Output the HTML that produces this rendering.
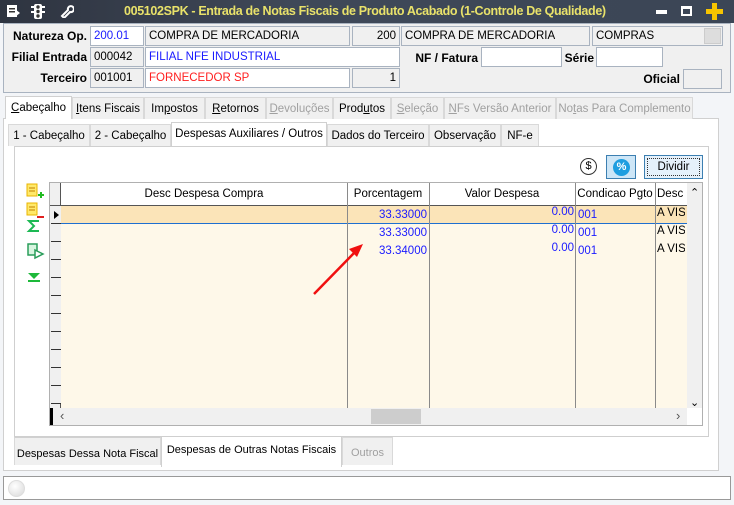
<!DOCTYPE html>
<html><head><meta charset="utf-8"><style>
*{box-sizing:border-box;margin:0;padding:0}
body{width:734px;height:505px;background:#f3f5f8;font-family:"Liberation Sans",sans-serif;font-size:12px;color:#000;position:relative;overflow:hidden}
.a{position:absolute}
.title{left:0;top:0;width:734px;height:23px;background:linear-gradient(90deg,#2e3440 0%,#3f4858 40%,#3b4656 100%)}
.title .t{left:124px;top:4px;color:#e9e26a;font-weight:bold;font-size:12.5px;letter-spacing:-0.35px;white-space:nowrap}
.inp{position:absolute;height:20px;border:1px solid #a9b3c0;background:#fff;padding:3px 3px;font-size:11.5px;white-space:nowrap;overflow:hidden}
.g{background:#f0f0f0}
.lbl{position:absolute;font-weight:bold;font-size:12px;text-align:right;white-space:nowrap}
.tab{position:absolute;height:22px;border:1px solid #d9d9d9;border-bottom:none;background:#f0f0f0;padding:5px 0 0;text-align:center;font-size:11.5px;white-space:nowrap}
.dis{color:#a0a0a0}
.act{background:#fff;border-color:#d0d0d0}
.vl{position:absolute;top:183px;height:225px;border-left:1px solid #8a8a8a}
.cell{position:absolute;font-size:11.5px;color:#1a1aff;white-space:nowrap}
.ind{position:absolute;left:51px;width:10px;height:18px;border-bottom:1px solid #333;background:#f0f0f0}
</style></head><body>
<div class="a title">
 <svg class="a" style="left:6px;top:4px" width="14" height="14"><rect x="1" y="1" width="10" height="12" fill="#fff"/><rect x="3" y="4" width="6" height="1.5" fill="#333"/><rect x="3" y="7" width="6" height="1.5" fill="#333"/><path d="M9 5l5 4-5 4z" fill="#fff"/></svg>
 <svg class="a" style="left:31px;top:3px" width="14" height="17"><rect x="3" y="1" width="8" height="15" rx="2" fill="#fff"/><circle cx="7" cy="4" r="1.7" fill="#333"/><circle cx="7" cy="8.5" r="1.7" fill="#333"/><circle cx="7" cy="13" r="1.7" fill="#333"/><rect x="0" y="3" width="3" height="2" fill="#fff"/><rect x="0" y="8" width="3" height="2" fill="#fff"/><rect x="11" y="3" width="3" height="2" fill="#fff"/><rect x="11" y="8" width="3" height="2" fill="#fff"/></svg>
 <svg class="a" style="left:60px;top:4px" width="14" height="14"><path d="M2 12l6-6a3 3 0 1 1 2 2l-6 6z" fill="none" stroke="#fff" stroke-width="2"/></svg>
 <div class="a t">005102SPK - Entrada de Notas Fiscais de Produto Acabado (1-Controle De Qualidade)</div>
 <div class="a" style="left:656px;top:10px;width:11px;height:4px;background:#fff"></div>
 <div class="a" style="left:681px;top:6px;width:11px;height:10px;border:2px solid #fff;border-top-width:3px"></div>
 <div class="a" style="left:712px;top:3px;width:5px;height:17px;background:#f6c400"></div>
 <div class="a" style="left:706px;top:9px;width:17px;height:5px;background:#f6c400"></div>
</div>
<div class="a" style="left:3px;top:23px;width:728px;height:70px;border:1px solid #a9b3c0;background:#f0f0f0"></div>
<div class="lbl" style="left:0;top:29px;width:87px">Natureza Op.</div>
<div class="inp" style="left:90px;top:26px;width:54px;color:#1a1aff">200.01</div>
<div class="inp g" style="left:145px;top:26px;width:205px">COMPRA DE MERCADORIA</div>
<div class="inp g" style="left:352px;top:26px;width:48px;text-align:right">200</div>
<div class="inp g" style="left:401px;top:26px;width:189px">COMPRA DE MERCADORIA</div>
<div class="inp g" style="left:592px;top:26px;width:131px">COMPRAS<div class="a" style="right:1px;top:1px;width:17px;height:16px;background:#ddd;border:1px solid #ccc"></div></div>
<div class="lbl" style="left:0;top:50px;width:87px">Filial Entrada</div>
<div class="inp g" style="left:90px;top:47px;width:54px">000042</div>
<div class="inp" style="left:145px;top:47px;width:255px;color:#1a1aff">FILIAL NFE INDUSTRIAL</div>
<div class="lbl" style="left:400px;top:51px;width:78px">NF / Fatura</div>
<div class="inp" style="left:481px;top:47px;width:81px"></div>
<div class="lbl" style="left:560px;top:51px;width:34px">Série</div>
<div class="inp" style="left:596px;top:47px;width:67px"></div>
<div class="lbl" style="left:0;top:71px;width:87px">Terceiro</div>
<div class="inp g" style="left:90px;top:68px;width:54px">001001</div>
<div class="inp" style="left:145px;top:68px;width:205px;color:#ff2020">FORNECEDOR SP</div>
<div class="inp g" style="left:352px;top:68px;width:48px;text-align:right">1</div>
<div class="lbl" style="left:620px;top:72px;width:60px">Oficial</div>
<div class="inp g" style="left:683px;top:69px;width:39px"></div>

<div class="a" style="left:3px;top:118px;width:716px;height:353px;border:1px solid #d0d0d0;background:#fff"></div>
<div class="tab act" style="left:5px;top:96px;width:67px;height:23px"><u>C</u>abeçalho</div>
<div class="tab" style="left:72px;top:97px;width:72px"><u>I</u>tens Fiscais</div>
<div class="tab" style="left:144px;top:97px;width:61px">Im<u>p</u>ostos</div>
<div class="tab" style="left:205px;top:97px;width:61px"><u>R</u>etornos</div>
<div class="tab dis" style="left:266px;top:97px;width:67px"><u>D</u>evoluções</div>
<div class="tab" style="left:333px;top:97px;width:58px">Prod<u>u</u>tos</div>
<div class="tab dis" style="left:391px;top:97px;width:53px"><u>S</u>eleção</div>
<div class="tab dis" style="left:444px;top:97px;width:112px"><u>N</u>Fs Versão Anterior</div>
<div class="tab dis" style="left:556px;top:97px;width:137px">No<u>t</u>as Para Complemento</div>

<div class="tab" style="left:8px;top:124px;width:82px">1 - Cabeçalho</div>
<div class="tab" style="left:90px;top:124px;width:81px">2 - Cabeçalho</div>
<div class="tab act" style="left:171px;top:122px;width:156px;height:25px;padding-top:5px">Despesas Auxiliares / Outros</div>
<div class="tab" style="left:327px;top:124px;width:102px">Dados do Terceiro</div>
<div class="tab" style="left:429px;top:124px;width:72px">Observação</div>
<div class="tab" style="left:501px;top:124px;width:38px">NF-e</div>

<div class="a" style="left:14px;top:146px;width:695px;height:291px;border:1px solid #cfcfcf;background:#fff"></div>
<div class="a" style="left:580px;top:158px;width:17px;height:17px;border:1.5px solid #333;border-radius:50%;text-align:center;font-size:11px;line-height:14px">$</div>
<div class="a" style="left:606px;top:155px;width:30px;height:24px;border:1px solid #3c7fb1;background:#cde6f7"><div class="a" style="left:6px;top:3px;width:17px;height:17px;border-radius:50%;background:#1e9ee0;color:#fff;font-weight:bold;font-size:11px;text-align:center;line-height:17px">%</div></div>
<div class="a" style="left:644px;top:155px;width:59px;height:24px;border:1px solid #3c7fb1;background:#e5f1fb;text-align:center;line-height:22px;font-size:11.5px"><div class="a" style="left:2px;top:2px;right:2px;bottom:2px;border:1px dotted #333"></div>Dividir</div>

<svg class="a" style="left:25px;top:182px" width="20" height="105">
 <rect x="2" y="2" width="10" height="12" fill="#ffe96a" stroke="#e8b400"/><line x1="4" y1="6" x2="10" y2="6" stroke="#c08000"/><line x1="4" y1="9" x2="10" y2="9" stroke="#c08000"/>
 <path d="M13 13h6M16 10v6" stroke="#22bb22" stroke-width="2"/>
 <rect x="2" y="21" width="10" height="12" fill="#ffe96a" stroke="#e8b400"/><line x1="4" y1="25" x2="10" y2="25" stroke="#c08000"/><line x1="4" y1="28" x2="10" y2="28" stroke="#c08000"/>
 <path d="M12 35h7" stroke="#e02020" stroke-width="2"/>
 <path d="M14 49H4l5-5-5-5h10" fill="none" stroke="#1db954" stroke-width="2"/>
 <rect x="3" y="62" width="9" height="11" fill="#d8f5e0" stroke="#2a9d5a" stroke-width="1.5"/><path d="M10 68l8 4-8 4z" fill="#fff" stroke="#2a9d5a" stroke-width="1.5"/>
 <path d="M3 91h12l-6 6z" fill="#1db93a"/><rect x="3" y="98" width="12" height="2" fill="#1db93a"/>
</svg>

<div class="a" style="left:49px;top:182px;width:654px;height:244px;border:1px solid #b0b0b0;background:#fff"></div>
<div class="a" style="left:61px;top:206px;width:626px;height:202px;background:#fef8e9"></div>
<div class="a" style="left:61px;top:206px;width:626px;height:18px;background:#fbe4b8;border-bottom:1px solid #1e6fd0"></div>
<div class="a" style="left:50px;top:183px;width:11px;height:225px;background:#f0f0f0;border-right:1px solid #555"></div>
<div class="a" style="left:50px;top:205px;width:637px;border-top:1.5px solid #555"></div>
<div class="ind" style="top:206px"></div><div class="ind" style="top:224px"></div><div class="ind" style="top:242px"></div><div class="ind" style="top:260px"></div><div class="ind" style="top:278px"></div><div class="ind" style="top:296px"></div><div class="ind" style="top:314px"></div><div class="ind" style="top:332px"></div><div class="ind" style="top:350px"></div><div class="ind" style="top:368px"></div><div class="ind" style="top:386px"></div>
<div class="a" style="left:54px;top:211px;border-left:5px solid #000;border-top:4px solid transparent;border-bottom:4px solid transparent"></div>
<div class="vl" style="left:347px"></div><div class="vl" style="left:429px"></div><div class="vl" style="left:575px"></div><div class="vl" style="left:655px"></div>
<div class="cell" style="left:61px;top:188px;width:286px;text-align:center;color:#000">Desc Despesa Compra</div>
<div class="cell" style="left:347px;top:188px;width:82px;text-align:center;color:#000">Porcentagem</div>
<div class="cell" style="left:429px;top:188px;width:146px;text-align:center;color:#000">Valor Despesa</div>
<div class="cell" style="left:575px;top:188px;width:80px;text-align:center;color:#000">Condicao Pgto</div>
<div class="cell" style="left:657px;top:188px;width:30px;overflow:hidden;color:#000">Desc C</div>
<div class="cell" style="left:347px;top:209px;width:80px;text-align:right">33.33000</div>
<div class="cell" style="left:347px;top:227px;width:80px;text-align:right">33.33000</div>
<div class="cell" style="left:347px;top:245px;width:80px;text-align:right">33.34000</div>
<div class="cell" style="left:429px;top:206px;width:145px;text-align:right">0.00</div>
<div class="cell" style="left:429px;top:224px;width:145px;text-align:right">0.00</div>
<div class="cell" style="left:429px;top:242px;width:145px;text-align:right">0.00</div>
<div class="cell" style="left:578px;top:209px">001</div><div class="cell" style="left:578px;top:227px">001</div><div class="cell" style="left:578px;top:245px">001</div>
<div class="cell" style="left:657px;top:207px;width:28px;overflow:hidden;color:#000">A VISTA</div>
<div class="cell" style="left:657px;top:225px;width:28px;overflow:hidden;color:#000">A VISTA</div>
<div class="cell" style="left:657px;top:243px;width:28px;overflow:hidden;color:#000">A VISTA</div>
<div class="a" style="left:687px;top:183px;width:15px;height:225px;background:#f0f0f0"></div>
<div class="a" style="left:690px;top:186px;font-size:11px">&#8963;</div>
<div class="a" style="left:690px;top:396px;font-size:11px">&#8964;</div>
<div class="a" style="left:50px;top:408px;width:637px;height:17px;background:#f0f0f0"></div>
<div class="a" style="left:50px;top:408px;width:3px;height:17px;background:#000"></div>
<div class="a" style="left:60px;top:408px;font-size:13px;color:#555">&#8249;</div>
<div class="a" style="left:676px;top:408px;font-size:13px;color:#555">&#8250;</div>
<div class="a" style="left:371px;top:409px;width:50px;height:15px;background:#cdcdcd"></div>
<svg class="a" style="left:310px;top:240px" width="60" height="60"><line x1="4" y1="54" x2="46" y2="11" stroke="#f01010" stroke-width="2.5"/><path d="M53 4l-14 5 8 8z" fill="#f01010"/></svg>

<div class="tab" style="left:14px;top:437px;width:147px;height:28px;padding-top:10px;border-top:1px solid #d0d0d0;font-size:11px">Despesas Dessa Nota Fiscal</div>
<div class="tab act" style="left:161px;top:437px;width:181px;height:30px;padding-top:7px;border-top:none;font-size:11px">Despesas de Outras Notas Fiscais</div>
<div class="tab dis" style="left:342px;top:437px;width:51px;height:28px;padding-top:9px;font-size:11px">Outros</div>

<div class="a" style="left:3px;top:476px;width:728px;height:24px;border:1px solid #999;background:#fff"></div>
<div class="a" style="left:8px;top:480px;width:17px;height:17px;border-radius:50%;background:radial-gradient(circle at 40% 35%,#fff,#d8d8d8);border:1px solid #ddd"></div>
</body></html>
